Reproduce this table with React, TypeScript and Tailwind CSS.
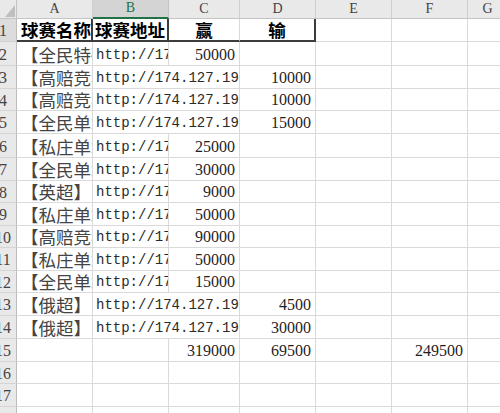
import React from 'react';

const CJK = "font-['Noto_Sans_CJK_SC',sans-serif]";
const SERIF = "font-['Liberation_Serif',serif]";
const MONO = "font-['Liberation_Mono',monospace]";

interface RowData {
  n: number;
  h: string;
  a?: string;
  b?: string;
  c?: string;
  d?: string;
  f?: string;
  wide?: boolean;
}

const URL = 'http://174.127.195.166/bet/index.html';

const rows: RowData[] = [
  { n: 2, h: 'h-[24px]', a: '【全民特码】', b: URL, c: '50000' },
  { n: 3, h: 'h-[23px]', a: '【高赔竞猜】', b: URL, d: '10000', wide: true },
  { n: 4, h: 'h-[22px]', a: '【高赔竞猜】', b: URL, d: '10000', wide: true },
  { n: 5, h: 'h-[23px]', a: '【全民单场】', b: URL, d: '15000', wide: true },
  { n: 6, h: 'h-[24px]', a: '【私庄单场】', b: URL, c: '25000' },
  { n: 7, h: 'h-[23px]', a: '【全民单场】', b: URL, c: '30000' },
  { n: 8, h: 'h-[22px]', a: '【英超】1', b: URL, c: '9000' },
  { n: 9, h: 'h-[23px]', a: '【私庄单场】', b: URL, c: '50000' },
  { n: 10, h: 'h-[22px]', a: '【高赔竞猜】', b: URL, c: '90000' },
  { n: 11, h: 'h-[23px]', a: '【私庄单场】', b: URL, c: '50000' },
  { n: 12, h: 'h-[22px]', a: '【全民单场】', b: URL, c: '15000' },
  { n: 13, h: 'h-[23px]', a: '【俄超】1', b: URL, d: '4500', wide: true },
  { n: 14, h: 'h-[23px]', a: '【俄超】1', b: URL, d: '30000', wide: true },
  { n: 15, h: 'h-[23px]', c: '319000', d: '69500', f: '249500' },
  { n: 16, h: 'h-[22px]' },
  { n: 17, h: 'h-[23px]' },
  { n: 18, h: 'h-[23px]' },
];

const cell = 'shrink-0 h-full border-r border-b border-[#dadada] overflow-hidden flex items-end';

const RowHead = ({ n, active }: { n: number; active?: boolean }) => (
  <div
    className={`w-[17px] shrink-0 h-full overflow-hidden flex items-center border-r border-b ${
      active ? 'bg-[#dcdcdc] border-r-[#bdbdbd] border-b-[#d0d0d0]' : 'bg-[#e9e9e9] border-r-[#bdbdbd] border-b-[#d4d4d4]'
    }`}
  >
    <div className={`w-[28px] shrink-0 -ml-[11px] pt-[2px] text-center text-[16px] leading-none text-[#444] ${SERIF}`}>{n}</div>
  </div>
);

const Num = ({ v }: { v?: string }) =>
  v ? <span className={`pr-[4px] pb-[2px] text-[16px] leading-none text-[#1f1f1f] ${SERIF}`}>{v}</span> : null;

const SheetRow = ({ r }: { r: RowData }) => (
  <div className={`flex ${r.h}`}>
    <RowHead n={r.n} />
    <div className={`${cell} w-[76px]`}>
      {r.a && (
        <span className={`whitespace-nowrap pl-[4px] pb-[2px] text-[17.5px] leading-none text-[#444] ${CJK}`}>{r.a}</span>
      )}
    </div>
    {r.wide ? (
      <div className={`${cell} w-[147px]`}>
        <span className={`whitespace-nowrap pl-[3px] pb-[3px] text-[14px] leading-none text-[#2a2a2a] ${MONO}`}>{r.b}</span>
      </div>
    ) : (
      <>
        <div className={`${cell} w-[76px]`}>
          {r.b && (
            <span className={`whitespace-nowrap pl-[3px] pb-[3px] text-[14px] leading-none text-[#2a2a2a] ${MONO}`}>{r.b}</span>
          )}
        </div>
        <div className={`${cell} w-[71px] justify-end`}>
          <Num v={r.c} />
        </div>
      </>
    )}
    <div className={`${cell} w-[76px] justify-end`}>
      <Num v={r.d} />
    </div>
    <div className={`${cell} w-[76px]`} />
    <div className={`${cell} w-[76px] justify-end`}>
      <Num v={r.f} />
    </div>
    <div className={`${cell} w-[40px]`} />
  </div>
);

const ColHead = ({ label, w, active }: { label: string; w: string; active?: boolean }) => (
  <div
    className={`${w} shrink-0 h-full flex items-end justify-center pb-[2px] text-[14px] leading-none ${SERIF} ${
      active
        ? 'bg-[#d4d4d4] text-[#217346] border-r border-r-[#c4c4c4] border-b-2 border-b-[#217346]'
        : 'bg-[#e9e9e9] text-[#444] border-r border-r-[#cfcfcf] border-b border-b-[#c4c4c4]'
    }`}
  >
    {label}
  </div>
);

export default function App() {
  return (
    <div className="w-[500px] h-[413px] overflow-hidden bg-white">
      {/* column letters */}
      <div className="flex h-[19px]">
        <div className="w-[17px] shrink-0 h-full bg-[#e9e9e9] border-r border-b border-[#c4c4c4]">
          <svg width="16" height="18" viewBox="0 0 16 18">
            <polygon points="15,5 15,17 5,17" fill="#bfbfbf" />
          </svg>
        </div>
        <ColHead label="A" w="w-[76px]" />
        <ColHead label="B" w="w-[76px]" active />
        <ColHead label="C" w="w-[71px]" />
        <ColHead label="D" w="w-[76px]" />
        <ColHead label="E" w="w-[76px]" />
        <ColHead label="F" w="w-[76px]" />
        <ColHead label="G" w="w-[40px]" />
      </div>

      {/* header row */}
      <div className="flex h-[23px]">
        <RowHead n={1} active />
        <div className="w-[76px] shrink-0 h-full overflow-hidden flex items-end border-r-2 border-b-2 border-[#3c3c3c]">
          <span className={`whitespace-nowrap pl-[4px] pb-[2px] text-[17.5px] font-bold leading-none text-black ${CJK}`}>球赛名称</span>
        </div>
        <div className="w-[76px] shrink-0 h-full overflow-hidden flex items-end border-r-2 border-b-2 border-[#3c3c3c]">
          <span className={`whitespace-nowrap pl-[2px] pb-[2px] text-[17.5px] font-bold leading-none text-black ${CJK}`}>球赛地址</span>
        </div>
        <div className="w-[71px] shrink-0 h-full overflow-hidden flex items-end justify-center border-r border-r-[#dadada] border-b-2 border-b-[#3c3c3c]">
          <span className={`pb-[2px] text-[17.5px] font-bold leading-none text-black ${CJK}`}>赢</span>
        </div>
        <div className="w-[76px] shrink-0 h-full overflow-hidden flex items-end justify-center border-r-2 border-b-2 border-[#3c3c3c]">
          <span className={`pb-[2px] text-[17.5px] font-bold leading-none text-black ${CJK}`}>输</span>
        </div>
        <div className={`${cell} w-[76px]`} />
        <div className={`${cell} w-[76px]`} />
        <div className={`${cell} w-[40px]`} />
      </div>

      {rows.map(r => (
        <SheetRow key={r.n} r={r} />
      ))}
    </div>
  );
}
